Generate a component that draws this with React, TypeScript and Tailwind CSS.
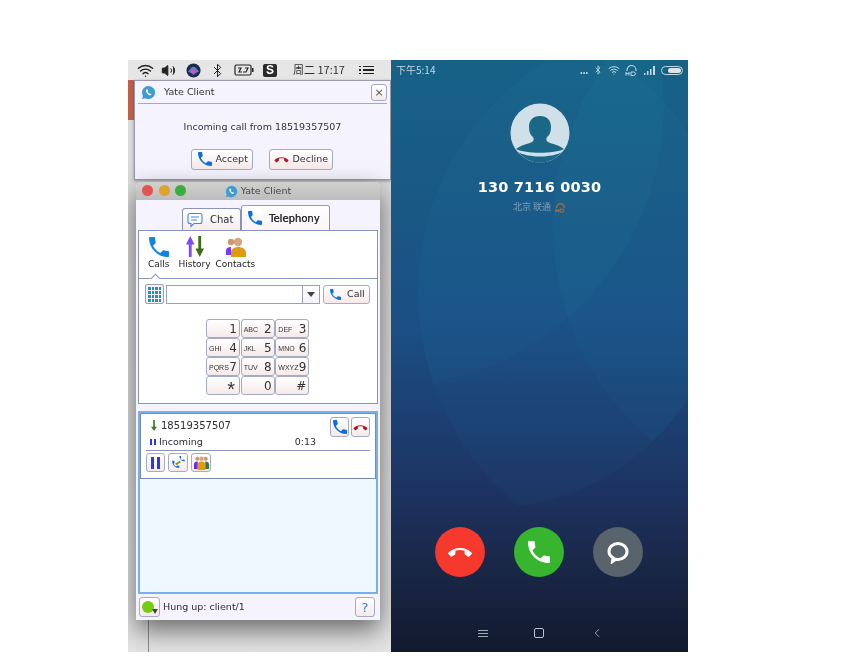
import type { ReactNode } from 'react';
import { Bluetooth, ChevronLeft, Volume2, Wifi } from 'lucide-react';

const HANDSET = 'M6.62 10.79c1.44 2.83 3.76 5.14 6.59 6.59l2.2-2.2c.27-.27.67-.36 1.02-.24 1.12.37 2.33.57 3.57.57.55 0 1 .45 1 1V20c0 .55-.45 1-1 1-9.39 0-17-7.61-17-17 0-.55.45-1 1-1h3.5c.55 0 1 .45 1 1 0 1.25.2 2.45.57 3.57.11.35.03.74-.25 1.02l-2.2 2.2z';
const HANGUP = 'M12 9c-1.6 0-3.15.25-4.6.72v3.1c0 .39-.23.74-.56.9-.98.49-1.87 1.12-2.66 1.85-.18.18-.43.28-.7.28-.28 0-.53-.11-.71-.29L.29 13.08c-.18-.17-.29-.42-.29-.7 0-.28.11-.53.29-.71C3.34 8.78 7.46 7 12 7s8.66 1.78 11.71 4.67c.18.18.29.43.29.71 0 .28-.11.53-.29.71l-2.48 2.48c-.18.18-.43.29-.71.29-.27 0-.52-.11-.7-.28-.79-.74-1.69-1.36-2.67-1.85-.33-.16-.56-.5-.56-.9v-3.1C15.15 9.25 13.6 9 12 9z';

const keys = [
  ['', '1'], ['ABC', '2'], ['DEF', '3'],
  ['GHI', '4'], ['JKL', '5'], ['MNO', '6'],
  ['PQRS', '7'], ['TUV', '8'], ['WXYZ', '9'],
  ['', '*'], ['', '0'], ['', '#'],
];

function Phone({ className, color = '#0a6fe0' }: { className: string; color?: string }) {
  return (
    <svg viewBox="3 3 18 18" className={className}>
      <path d={HANDSET} fill={color} />
    </svg>
  );
}

function Hangup({ className, color = '#b5121b' }: { className: string; color?: string }) {
  return (
    <svg viewBox="0 5 24 12" className={className}>
      <path d={HANGUP} fill={color} />
    </svg>
  );
}

function YateLogo({ className }: { className: string }) {
  return (
    <svg viewBox="0 0 16 16" className={className}>
      <path d="M8 1a7 7 0 1 1-3.6 13L1 15l1.2-3.3A7 7 0 0 1 8 1z" fill="#3f9bd0" />
      <path d="M6 4.5c-1 .5-1 1.7-.2 3.2s2.2 3.2 3.7 3.3c.9 0 1.5-.5 1.6-1.1L9.6 8.7l-.8.6c-.7-.4-1.5-1.4-1.7-2.2l.7-.7L6.9 4.4z" fill="#fff" />
    </svg>
  );
}

function PinkButton({ className, children }: { className: string; children: ReactNode }) {
  return (
    <div className={`flex items-center rounded-[3px] border border-[#a4abc4] bg-linear-to-b from-white to-[#f7e9ea] ${className}`}>
      {children}
    </div>
  );
}

function MenuBar() {
  return (
    <div className="flex h-[20px] items-center bg-[#e6e6e6] pl-[9px] text-[#222]">
      <Wifi className="h-[17px] w-[17px]" strokeWidth={2} />
      <Volume2 className="ml-[7px] h-[15px] w-[15px]" fill="#222" strokeWidth={1.5} />
      <svg viewBox="0 0 16 16" className="ml-[10px] h-[15px] w-[15px]">
        <circle cx="8" cy="8" r="7.5" fill="#1e2a4a" />
        <path d="M2 9c2-1 3-5 6-5s4 4 6 5c-2 1-3 1-6 4-3-3-4-3-6-4z" fill="#5b7fd8" />
        <path d="M5 9c1-1 2-3 3-3s2 2 3 3c-1 .5-2 1-3 2-1-1-2-1.500-3-2z" fill="#e84aa0" />
      </svg>
      <Bluetooth className="ml-[9px] h-[15px] w-[15px]" strokeWidth={1.6} />
      <svg viewBox="0 0 20 12" className="ml-[9px] h-[12px] w-[20px]">
        <rect x="1" y="1" width="16" height="10" rx="1.5" fill="none" stroke="#222" strokeWidth="1.2" />
        <rect x="18" y="4" width="1.500" height="4" fill="#222" />
        <path d="M4 4h3l-2 4h3M9 8h3l2-4h-3" fill="none" stroke="#222" strokeWidth="1.2" />
      </svg>
      <div className="ml-[9px] flex h-[13px] w-[14px] items-center justify-center rounded-[2px] bg-[#2a2a2a] font-['Liberation_Sans',sans-serif] text-[12px] leading-none font-bold text-white">
        S
      </div>
      <span className="mb-[2px] ml-[16px] font-['Noto_Sans_CJK_SC','DejaVu_Sans',sans-serif] text-[11px] whitespace-nowrap text-[#333]">周二 17:17</span>
      <div className="ml-[14px] flex w-[15px] flex-col gap-[2px]">
        {[0, 1, 2].map((row) => (
          <div key={row} className="flex gap-[2px]">
            <div className="h-[1.500px] w-[2px] bg-[#222]" />
            <div className="h-[1.500px] w-[11px] bg-[#222]" />
          </div>
        ))}
      </div>
    </div>
  );
}

function IncomingDialog() {
  return (
    <div className="ml-[6px] flex h-[100px] flex-col border border-[#9a9aa8] bg-[#f5f3fe] px-[3px] text-[#333] shadow-[0_1px_3px_rgba(0,0,0,0.35)]">
      <div className="flex h-[23px] items-center border-b border-[#a3a8c8] pl-[3px]">
        <YateLogo className="h-[15px] w-[15px]" />
        <span className="ml-[8px] text-[9.5px]">Yate Client</span>
        <PinkButton className="ml-auto h-[17px] w-[16px] justify-center text-[#555]">
          <span className="text-[11px] leading-none">×</span>
        </PinkButton>
      </div>
      <div className="mt-[18px] text-center text-[9.5px] leading-none">Incoming call from 18519357507</div>
      <div className="mt-[17px] flex justify-center gap-[16px] pr-[2px]">
        <PinkButton className="h-[21px] w-[62px] pl-[6px]">
          <Phone className="h-[14px] w-[14px]" />
          <span className="ml-[4px] text-[9.5px]">Accept</span>
        </PinkButton>
        <PinkButton className="h-[21px] w-[64px] pl-[4px]">
          <Hangup className="h-[7px] w-[15px]" />
          <span className="ml-[4px] text-[9.5px]">Decline</span>
        </PinkButton>
      </div>
    </div>
  );
}

function HistoryIcon() {
  return (
    <svg viewBox="0 0 20 24" className="h-[23px] w-[19px]">
      <path d="M5.500 1L10 10H7v13H4V10H1z" fill="#7a4cf5" />
      <path d="M14 1h3v13h3l-4.500 9L11 14h3z" fill="#3f6d12" />
    </svg>
  );
}

function ContactsIcon({ className }: { className: string }) {
  return (
    <svg viewBox="0 0 22 22" className={className}>
      <circle cx="7" cy="6" r="3.200" fill="#c99a78" />
      <path d="M2 19v-4c0-3 2-4 5-4v8z" fill="#7a3cf0" />
      <circle cx="14" cy="6" r="4.200" fill="#d9a57f" />
      <path d="M7 21v-4c0-4 3-6 7-6s8 2 8 6v4z" fill="#e09a10" />
    </svg>
  );
}

function ToolTab({ label, children }: { label: string; children: ReactNode }) {
  return (
    <div className="flex flex-col items-center">
      <div className="flex h-[23px] items-end">{children}</div>
      <span className="mt-[2px] text-[9px] leading-none text-[#222]">{label}</span>
    </div>
  );
}

function Keypad() {
  return (
    <div className="mt-[15px] mr-[2px] ml-auto grid w-[103px] -translate-x-[66px] grid-cols-3 gap-x-px">
      {keys.map(([letters, digit]) => (
        <PinkButton key={digit} className="h-[19px] w-[34px] justify-between border-[#9aa0b8] px-[2px] text-[#333]">
          <span className="pt-[2px] font-['Liberation_Sans',sans-serif] text-[7px] leading-none">{letters}</span>
          <span className={`text-[12px] leading-none ${digit === '*' ? 'pt-[6px] pr-[2px] font-["Liberation_Sans",sans-serif] text-[20px]' : ''}`}>{digit}</span>
        </PinkButton>
      ))}
    </div>
  );
}

function YateWindow() {
  return (
    <div className="relative mt-[2px] ml-[8px] flex h-[438px] w-[244px] flex-col overflow-hidden rounded-t-[5px] bg-[#f5f3fe] text-[#2c2c33] shadow-[0_10px_26px_rgba(0,0,0,0.55)]">
      <div className="relative flex h-[18px] items-center justify-center bg-linear-to-b from-[#d0d0d0] to-[#bdbdbd]">
        <div className="absolute top-[3px] left-[6px] flex gap-[5.500px]">
          <div className="h-[11px] w-[11px] rounded-full bg-[#e0554d]" />
          <div className="h-[11px] w-[11px] rounded-full bg-[#e1a22e]" />
          <div className="h-[11px] w-[11px] rounded-full bg-[#3aad3d]" />
        </div>
        <YateLogo className="h-[13px] w-[13px]" />
        <span className="ml-[3px] text-[9.5px] text-[#444]">Yate Client</span>
      </div>

      <div className="mt-[5px] flex h-[25px] items-end pl-[46px]">
        <div className="flex h-[22px] w-[59px] items-center rounded-t-[3px] border border-b-0 border-[#8a94b8] bg-linear-to-b from-white to-[#f7eaec] pl-[4px]">
          <svg viewBox="0 0 16 16" className="h-[16px] w-[16px]">
            <path d="M3 1.500h10a2 2 0 0 1 2 2v6a2 2 0 0 1-2 2H7l-3 3v-3H3a2 2 0 0 1-2-2v-6a2 2 0 0 1 2-2z" fill="#fff" stroke="#2f8cf0" strokeWidth="1.100" />
            <path d="M4 5h8M4 8h6" stroke="#2f8cf0" strokeWidth="1" />
          </svg>
          <span className="ml-[7px] text-[10px]">Chat</span>
        </div>
        <div className="flex h-[25px] w-[89px] items-center rounded-t-[3px] border border-b-0 border-[#8a94b8] border-t-[#6ea8e8] bg-linear-to-b from-white to-[#fbf4f6] pl-[6px]">
          <Phone className="h-[14px] w-[14px]" />
          <span className="ml-[7px] text-[10px] [text-shadow:0.3px_0_0_#2c2c33]">Telephony</span>
        </div>
      </div>

      <div className="mx-[2px] flex h-[174px] flex-col border border-[#8a94b8] bg-white">
        <div className="relative flex h-[48px] gap-[6px] border-b border-[#8a94b8] pt-[4px] pl-[9px]">
          <ToolTab label="Calls">
            <Phone className="h-[22px] w-[20px]" color="#0f86e0" />
          </ToolTab>
          <div className="ml-[3px]">
            <ToolTab label="History">
              <HistoryIcon />
            </ToolTab>
          </div>
          <div className="-ml-[1px]">
            <ToolTab label="Contacts">
              <ContactsIcon className="h-[22px] w-[22px]" />
            </ToolTab>
          </div>
          <div className="absolute -bottom-[4px] left-[13px] h-[7px] w-[7px] rotate-45 border-t border-l border-[#8a94b8] bg-white" />
        </div>
        <div className="mt-[5px] flex h-[20px] items-center pl-[6px]">
          <div className="flex h-[20px] w-[19px] items-center justify-center rounded-[2px] border border-[#9aa0b8] bg-[#f3f3fb]">
            <div className="grid grid-cols-4 gap-px">
              {Array.from({ length: 16 }).map((_, i) => (
                <div key={i} className="h-[3px] w-[2.500px] bg-[#2a8fb5]" />
              ))}
            </div>
          </div>
          <div className="ml-[2px] flex h-[19px] w-[154px] border border-[#9aa0b8] bg-white">
            <div className="ml-auto flex w-[17px] items-center justify-center border-l border-[#9aa0b8] bg-linear-to-b from-white to-[#f3f3f6]">
              <div className="h-0 w-0 border-x-[4px] border-t-[5px] border-x-transparent border-t-[#444]" />
            </div>
          </div>
          <PinkButton className="ml-[3px] h-[19px] w-[47px] pl-[6px]">
            <Phone className="h-[11px] w-[11px]" />
            <span className="ml-[6px] text-[9.5px]">Call</span>
          </PinkButton>
        </div>
        <Keypad />
      </div>

      <div className="mx-[2px] mt-[7px] h-[183px] border-2 border-[#78b0ee] bg-[#eff7ff]">
        <div className="flex h-[66px] flex-col border border-[#7a8ab8] bg-white px-[5px]">
          <div className="relative mt-[3px] h-[20px]">
            <div className="flex h-[17px] items-center pl-[5px]">
              <svg viewBox="0 0 7 13" className="h-[13px] w-[6px]">
                <path d="M2.500 0h2v8H7l-3.500 5L0 8h2.500z" fill="#3f7d22" />
              </svg>
              <span className="ml-[4px] text-[10px]">18519357507</span>
            </div>
            <div className="absolute top-0 right-0 flex gap-[2px]">
              <PinkButton className="h-[20px] w-[19px] justify-center">
                <Phone className="h-[14px] w-[14px]" />
              </PinkButton>
              <PinkButton className="h-[20px] w-[19px] justify-center">
                <Hangup className="h-[7px] w-[15px]" />
              </PinkButton>
            </div>
          </div>
          <div className="-mt-[1px] flex h-[15px] items-center border-b border-[#8a94b8] pb-[3px] pl-[4px]">
            <div className="flex gap-[2px]">
              <div className="h-[6px] w-[2px] bg-[#2a3ae0]" />
              <div className="h-[6px] w-[2px] bg-[#2a3ae0]" />
            </div>
            <span className="ml-[3px] text-[9.5px] leading-none">Incoming</span>
            <span className="ml-[92px] text-[9.5px] leading-none">0:13</span>
          </div>
          <div className="mt-[2px] flex gap-[3px]">
            <PinkButton className="h-[19px] w-[19px] justify-center gap-[3px]">
              <div className="h-[12px] w-[3px] bg-[#2a3ae0]" />
              <div className="h-[12px] w-[3px] bg-[#2a3ae0]" />
            </PinkButton>
            <PinkButton className="h-[19px] w-[20px] justify-center">
              <svg viewBox="0 0 16 16" className="h-[15px] w-[15px]">
                <path d={HANDSET} transform="translate(0 5) scale(.42)" fill="#0a6fe0" />
                <path d={HANDSET} transform="translate(8 0) scale(.32)" fill="#0a6fe0" />
                <path d="M5 10l5-3" stroke="#7a9a20" strokeWidth="2" />
              </svg>
            </PinkButton>
            <PinkButton className="h-[19px] w-[20px] justify-center">
              <svg viewBox="0 0 18 16" className="h-[15px] w-[17px]">
                <circle cx="4.500" cy="4" r="2.200" fill="#c99a78" />
                <circle cx="13.500" cy="4" r="2.200" fill="#c99a78" />
                <circle cx="9" cy="4" r="2.400" fill="#d9a57f" />
                <path d="M1 15v-5c0-2 1.500-3 4-3v8z" fill="#6a2cf0" />
                <path d="M13 7c2.500 0 4 1 4 3v5h-4z" fill="#2f7a3f" />
                <path d="M5 16v-6c0-2 2-3 4-3s4 1 4 3v6z" fill="#e09a10" />
              </svg>
            </PinkButton>
          </div>
        </div>
      </div>

      <div className="mx-[3px] mt-[2px] flex h-[22px] items-center">
        <PinkButton className="relative h-[20px] w-[21px] justify-center">
          <div className="h-[12px] w-[12px] -translate-x-[2px] rounded-full bg-[#76cc12]" />
          <div className="absolute right-[1px] bottom-[2px] h-0 w-0 border-x-[3px] border-t-[5px] border-x-transparent border-t-[#444]" />
        </PinkButton>
        <span className="ml-[3px] text-[9.5px]">Hung up: client/1</span>
        <PinkButton className="mr-[2px] ml-auto h-[20px] w-[20px] justify-center">
          <span className="text-[13px] leading-none text-[#3a78e8]">?</span>
        </PinkButton>
      </div>
    </div>
  );
}

function PhoneBackdrop() {
  return (
    <svg viewBox="391 60 297 592" className="absolute inset-0 h-full w-full">
      <defs>
        <clipPath id="arc-a"><circle cx="382" cy="106" r="282" /></clipPath>
        <clipPath id="arc-b"><circle cx="693" cy="293" r="275" /></clipPath>
        <clipPath id="arc-c"><circle cx="835" cy="227" r="282" /></clipPath>
        <clipPath id="arc-d"><circle cx="485" cy="266" r="243" /></clipPath>
      </defs>
      <g clipPath="url(#arc-b)">
        <g clipPath="url(#arc-d)">
          <rect x="391" y="60" width="297" height="592" fill="#2a78a0" opacity="0.08" />
        </g>
      </g>
      <g clipPath="url(#arc-a)">
        <g clipPath="url(#arc-b)">
          <rect x="391" y="60" width="297" height="592" fill="#2a8fa8" opacity="0.06" />
        </g>
      </g>
      <g clipPath="url(#arc-c)">
        <g clipPath="url(#arc-d)">
          <rect x="391" y="60" width="297" height="592" fill="#2a8fa8" opacity="0.06" />
        </g>
      </g>
      <g clipPath="url(#arc-a)">
        <g clipPath="url(#arc-c)">
          <rect x="391" y="60" width="297" height="592" fill="#2a9fa8" opacity="0.06" />
        </g>
      </g>
    </svg>
  );
}

function PhoneScreen() {
  return (
    <div className="relative flex h-[592px] w-[297px] flex-col items-center overflow-hidden bg-[linear-gradient(180deg,#176286_0%,#1b4f85_45%,#1d3463_72%,#1b2a4e_82%,#11192d_100%)] font-['Noto_Sans_CJK_SC',sans-serif] text-white">
      <PhoneBackdrop />
      <div className="relative flex h-[20px] w-full items-center pr-[5px] pl-[5px] text-[#c4d8e2]">
        <span className="text-[10px] leading-none">下午5:14</span>
        <div className="ml-auto flex items-center gap-[5px]">
          <span className="text-[10px] leading-none font-bold tracking-[-0.5px]">...</span>
          <Bluetooth className="h-[10px] w-[10px]" strokeWidth={2} />
          <Wifi className="h-[12px] w-[12px]" strokeWidth={2} />
          <svg viewBox="0 0 13 12" className="h-[12px] w-[13px]">
            <path d="M2 7V6a4.500 4.500 0 0 1 9 0v1" fill="none" stroke="currentColor" strokeWidth="1.100" />
            <path d="M1 8v3.500M4 8v3.500M1 9.700h3M6 8h2.500q2 0 2 1.700t-2 1.800H6z" fill="none" stroke="currentColor" strokeWidth="1" />
          </svg>
          <svg viewBox="0 0 13 10" className="h-[10px] w-[13px]">
            <path d="M1 8h1.500v2H1zM4 6h1.500v4H4zM7 4h1.500v6H7zM10 1h2v9h-2z" fill="currentColor" />
          </svg>
          <div className="flex h-[9px] w-[22px] items-center rounded-full border border-[#c4d8e2] p-px">
            <div className="ml-auto h-[5px] w-[13px] rounded-full bg-[#d8e6ec]" />
          </div>
        </div>
      </div>

      <svg viewBox="0 0 60 60" className="relative mt-[23px] h-[60px] w-[60px]">
        <circle cx="30" cy="30" r="29.500" fill="#d0e0e8" />
        <path d="M6 46c5-4 12-5 16-7 2-1 2-3 1-5-3-2-4-6-4-10 0-7 4-11 11-11s11 4 11 11c0 4-1 8-4 10-1 2-1 4 1 5 4 2 11 3 16 7-10 5-38 5-48 0z" fill="#1a6788" />
        <path d="M8 49a28 28 0 0 0 44 0c-10 6-34 6-44 0z" fill="#1a6788" />
      </svg>

      <div className="relative mt-[12px] text-center font-['DejaVu_Sans',sans-serif] text-[14.5px] leading-[24px] font-bold tracking-[0.2px] whitespace-nowrap blur-[0.7px]">
        130 7116 0030
      </div>
      <div className="relative mt-[2px] flex items-center text-[9px] leading-[12px] text-[#7d9fb6]">
        <span>北京 联通</span>
        <svg viewBox="0 0 13 12" className="ml-[4px] h-[11px] w-[11px] text-[#d9701c]">
          <path d="M2 7V6a4.500 4.500 0 0 1 9 0v1" fill="none" stroke="currentColor" strokeWidth="1.300" />
          <path d="M1 8v3.500M4 8v3.500M1 9.700h3M6 8h2.500q2 0 2 1.700t-2 1.800H6z" fill="none" stroke="currentColor" strokeWidth="1" />
        </svg>
      </div>

      <div className="relative mt-[314px] mr-[2px] flex gap-[29px]">
        <div className="flex h-[50px] w-[50px] items-center justify-center rounded-full bg-[#f5392d]">
          <Hangup className="h-[12px] w-[26px]" color="#fff" />
        </div>
        <div className="flex h-[50px] w-[50px] items-center justify-center rounded-full bg-[#37b52f]">
          <Phone className="h-[22px] w-[22px]" color="#fff" />
        </div>
        <div className="flex h-[50px] w-[50px] items-center justify-center rounded-full bg-[#59636b]">
          <svg viewBox="0 0 24 24" className="h-[24px] w-[24px]">
            <path d="M12 3.500c5 0 9 3.500 9 8s-4 8-9 8c-1 0-1.800-.1-2.500-.3L6.500 21.500l.5-3.700C4.500 16.300 3 14 3 11.500c0-4.500 4-8 9-8z" fill="none" stroke="#fff" strokeWidth="3" />
          </svg>
        </div>
      </div>

      <div className="relative mt-[49px] ml-[2px] flex items-center">
        <div className="flex w-[10px] flex-col gap-[2px]">
          <div className="h-px bg-[#a0acb8]" />
          <div className="h-px bg-[#a0acb8]" />
          <div className="h-px bg-[#a0acb8]" />
        </div>
        <div className="ml-[46px] h-[10px] w-[10px] rounded-[2px] border border-[#b8c2cc]" />
        <ChevronLeft className="ml-[46px] h-[14px] w-[14px] text-[#b8c2cc]" strokeWidth={1.4} />
      </div>
    </div>
  );
}

export default function App() {
  return (
    <div className="h-[661px] w-[846px] overflow-hidden bg-white pt-[60px] pl-[128px] font-['DejaVu_Sans',sans-serif]">
      <div className="flex h-[592px] blur-[0.35px]">
        <div className="relative h-[592px] w-[263px] overflow-hidden bg-linear-to-b from-[#d8d8d8] to-[#e4e4e4]">
          <div className="absolute top-[20px] left-0 h-[40px] w-[8px] bg-[#c0604a]" />
          <div className="absolute top-[560px] left-[20px] h-[32px] w-px bg-[#8f8f8f]" />
          <div className="relative">
            <MenuBar />
            <IncomingDialog />
            <YateWindow />
          </div>
        </div>
        <PhoneScreen />
      </div>
    </div>
  );
}
